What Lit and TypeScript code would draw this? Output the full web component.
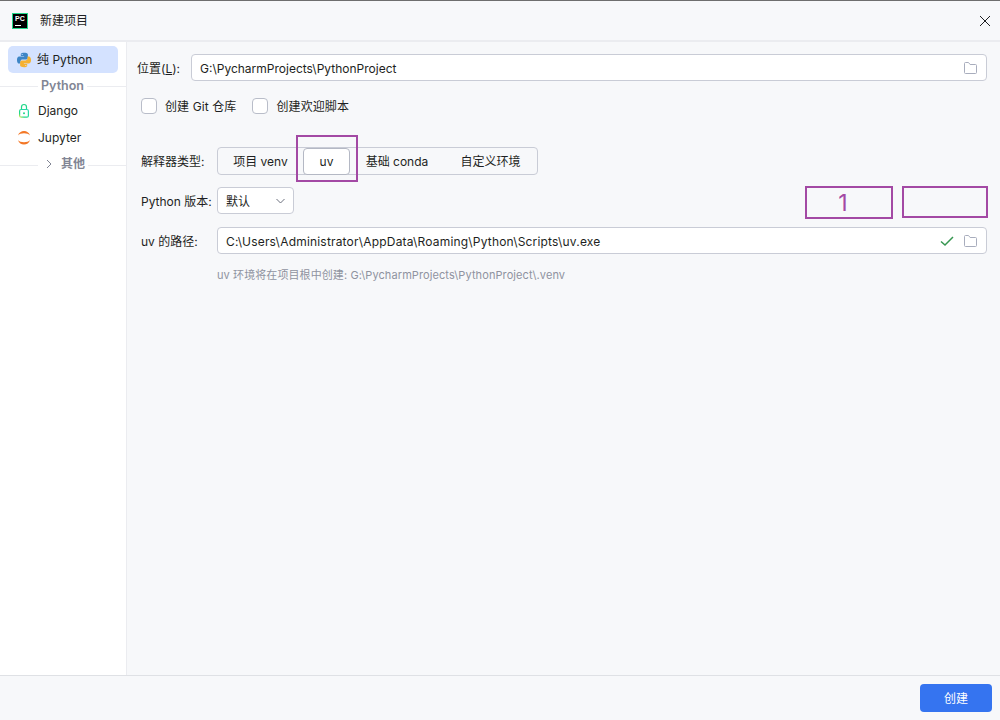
import { LitElement, html, css } from "lit";
import { customElement } from "lit/decorators.js";

const folder = html`<svg class="ic" width="16" height="16" viewBox="0 0 16 16" fill="none"><path d="M2.500 3.500a1 1 0 0 1 1-1h3l1.600 2h5.400a1 1 0 0 1 1 1v7a1 1 0 0 1-1 1h-10a1 1 0 0 1-1-1z" stroke="#a8adbd"/></svg>`;

@customElement("app-root")
export class AppRoot extends LitElement {
  static styles = css`
    :host { display: block; width: 1000px; height: 720px; position: relative; overflow: hidden; background: #f7f8fa;
      font-family: Inter, "Noto Sans CJK SC", sans-serif; font-size: 12px; color: #1e1f22; line-height: 16px; }
    .window { height: 720px; display: flex; flex-direction: column; border-top: 1px solid #6e6e6e; box-sizing: border-box; }
    .title { height: 39px; flex: none; display: flex; align-items: center; padding: 0 9px 0 12px; gap: 12px; border-bottom: 2px solid #ebecf0; }
    .logo { width: 16px; height: 16px; box-sizing: border-box; background: #000; border: 1px solid #21d789; position: relative; display: block; color: #fff; font: 700 7px/7px "Liberation Sans", sans-serif; padding-left: 2px; padding-top: 1px; }
    .logo::after { content: ""; position: absolute; left: 2px; bottom: 2px; width: 6px; height: 1px; background: #fff; }
    .title .grow { flex: 1; }
    .body { flex: 1; display: flex; min-height: 0; }
    .side { width: 126px; flex: none; background: #fff; border-right: 1px solid #ebecf0; padding-top: 4px; }
    .item { height: 27px; display: flex; align-items: center; gap: 5px; padding-left: 17px; }
    .item.sel { margin: 0 8px; padding-left: 8px; background: #d4e2ff; border-radius: 5px; }
    .group { height: 24px; display: flex; align-items: center; gap: 3px; color: #818594; font-weight: 600; font-size: 12px; }
    .group::before, .group::after { content: ""; height: 1px; background: #ebecf0; flex: 1; margin-top: 3px; }
    .group::before { flex: none; width: 38px; }
    .group .py { font-size: 12.5px; padding-top: 2px; }
    .group.other { height: 25px; }
    .group.other span { display: flex; align-items: center; gap: 8px; padding-left: 4px; }
    .main { flex: 1; padding: 12px 13px 0 10px; min-width: 0; }
    .row { display: flex; align-items: center; }
    .lbl { flex: none; width: 80px; padding-left: 4px; padding-top: 2px; box-sizing: border-box; white-space: nowrap; }
    .input { flex: 1; height: 27px; box-sizing: border-box; background: #fff; border: 1px solid #c9ccd6; border-radius: 4px; display: flex; align-items: center; padding: 0 8px; gap: 8px; }
    .input span { flex: 1; padding-top: 2px; }
    .loc .lbl { width: 54px; padding-left: 0; }
    .path .input span { letter-spacing: 0.18px; }
    .checks { margin-top: 17px; padding-left: 4px; height: 16px; }
    .box { width: 16px; height: 16px; box-sizing: border-box; background: #fff; border: 1px solid #b9bdc9; border-radius: 4px; }
    .ck { display: flex; align-items: center; gap: 8px; margin-right: 16px; letter-spacing: 0.1px; }
    .ck span { padding-top: 2px; }
    .types { margin-top: 33px; }
    .seg { display: flex; align-items: center; height: 28px; width: 321px; box-sizing: border-box; border: 1px solid #c9ccd6; border-radius: 4px; }
    .seg div { text-align: center; flex: none; padding-top: 2px; }
    .c1 { width: 85px; }
    .c3 { width: 94px; }
    .c4 { width: 93px; }
    .seg .on { height: 27px; box-sizing: border-box; background: #fff; border: 1px solid #b4b8c4; border-radius: 4px; line-height: 25px; width: 47px; padding-top: 0; }
    .ver { margin-top: 12px; }
    .sel-box { width: 77px; height: 27px; box-sizing: border-box; background: #fff; border: 1px solid #c9ccd6; border-radius: 4px; display: flex; align-items: center; justify-content: space-between; padding: 0 8px; }
    .sel-box span { padding-top: 2px; }
    .path { margin-top: 13px; }
    .hint { margin: 13px 0 0 80px; font-size: 11px; letter-spacing: 0.09px; color: #8f93a0; line-height: 16px; }
    .foot { height: 45px; box-sizing: border-box; flex: none; border-top: 1px solid #dfe1e5; display: flex; justify-content: flex-end; align-items: flex-start; padding: 8px 8px 0 0; }
    .btn { width: 72px; height: 28px; background: #3574f0; color: #fff; border-radius: 4px; text-align: center; line-height: 30px; }
    .mark { position: absolute; box-sizing: border-box; border: 2px solid #a349a4; color: #a349a4; display: flex; align-items: center; justify-content: center; font-size: 23px; }
    .m0 { left: 296px; top: 135px; width: 62px; height: 47px; }
    .m1 { left: 805px; top: 186px; width: 88px; height: 33px; padding-right: 12px; }
    .m2 { left: 902px; top: 186px; width: 86px; height: 32px; }
    svg { display: block; flex: none; }
  `;

  render() {
    return html`
      <div class="window">
        <div class="title">
          <span class="logo">PC</span><span>新建项目</span><span class="grow"></span>
          <svg width="12" height="12" viewBox="0 0 12 12"><path d="M1 1l10 10M11 1L1 11" stroke="#1e1f22" stroke-width="1"/></svg>
        </div>
        <div class="body">
          <div class="side">
            <div class="item sel">
              <svg width="16" height="16" viewBox="0 0 16 16">
                <path d="M8 .8C4.600.8 4.800 2.300 4.800 2.300v1.600H8.100v.5H3.500S1 4.100 1 7.900s2.200 3.700 2.200 3.700h1.300V9.800s-.1-2.200 2.100-2.200h3.300s2 0 2-2V2.700S12.200.8 8 .8zM6.200 1.900a.6.6 0 1 1 0 1.200.6.6 0 0 1 0-1.200z" fill="#3d85c6"/>
                <path d="M8 15.200c3.400 0 3.200-1.500 3.200-1.500v-1.600H7.900v-.5h4.600s2.500.3 2.500-3.500-2.200-3.700-2.200-3.700h-1.300v1.800s.1 2.200-2.100 2.200H6.100s-2 0-2 2v2.900s-.3 1.900 3.900 1.900zm1.800-1.100a.6.6 0 1 1 0-1.200.6.6 0 0 1 0 1.200z" fill="#f6b130"/>
              </svg>
              <span>纯 Python</span>
            </div>
            <div class="group"><span class="py">Python</span></div>
            <div class="item">
              <svg width="16" height="16" viewBox="0 0 16 16" fill="none">
                <defs><linearGradient id="dj" x1="0" y1="1" x2="1" y2="0"><stop offset="0" stop-color="#d9e84a"/><stop offset=".25" stop-color="#21d789"/><stop offset="1" stop-color="#2ad8b0"/></linearGradient></defs>
                <path d="M4.500 6V4a2.500 2.500 0 0 1 5 0v2" stroke="#21d789" stroke-width="1.200"/>
                <rect x="2.600" y="6.500" width="8.800" height="7.700" rx="1.500" stroke="url(#dj)" stroke-width="1.200"/>
                <circle cx="7" cy="10.300" r="1" fill="#21d789"/>
              </svg>
              <span>Django</span>
            </div>
            <div class="item">
              <svg width="16" height="16" viewBox="0 0 16 16"><path d="M1 5.500C2.500-.5 11.500-.5 13 5.500 11 2.500 3 2.500 1 5.500zM1 10c1.500 6 10.500 6 12 0-2 3-10 3-12 0z" fill="#f37726"/></svg>
              <span>Jupyter</span>
            </div>
            <div class="group other"><span>
              <svg width="8" height="10" viewBox="0 0 8 10" fill="none"><path d="M2 1l4 4-4 4" stroke="#818594"/></svg>其他</span></div>
          </div>
          <div class="main">
            <div class="row loc">
              <div class="lbl">位置(<u>L</u>):</div>
              <div class="input"><span>G:\\PycharmProjects\\PythonProject</span>${folder}</div>
            </div>
            <div class="row checks">
              <label class="ck"><div class="box"></div><span>创建 Git 仓库</span></label>
              <label class="ck"><div class="box"></div><span>创建欢迎脚本</span></label>
            </div>
            <div class="row types">
              <div class="lbl">解释器类型:</div>
              <div class="seg">
                <div class="c1">项目 venv</div>
                <div class="on">uv</div>
                <div class="c3">基础 conda</div>
                <div class="c4">自定义环境</div>
              </div>
            </div>
            <div class="row ver">
              <div class="lbl">Python 版本:</div>
              <div class="sel-box"><span>默认</span>
                <svg width="9" height="6" viewBox="0 0 9 6" fill="none"><path d="M.5 1l4 4 4-4" stroke="#6c707e"/></svg></div>
            </div>
            <div class="row path">
              <div class="lbl">uv 的路径:</div>
              <div class="input"><span>C:\\Users\\Administrator\\AppData\\Roaming\\Python\\Scripts\\uv.exe</span>
                <svg width="14" height="14" viewBox="0 0 14 14" fill="none"><path d="M1 7.500l4 3.500 8-8" stroke="#369650" stroke-width="1.500"/></svg>${folder}</div>
            </div>
            <div class="hint">uv 环境将在项目根中创建: G:\\PycharmProjects\\PythonProject\\.venv</div>
          </div>
        </div>
        <div class="foot"><div class="btn">创建</div></div>
      </div>
      <div class="mark m0"></div>
      <div class="mark m1">1</div>
      <div class="mark m2"></div>
    `;
  }
}
